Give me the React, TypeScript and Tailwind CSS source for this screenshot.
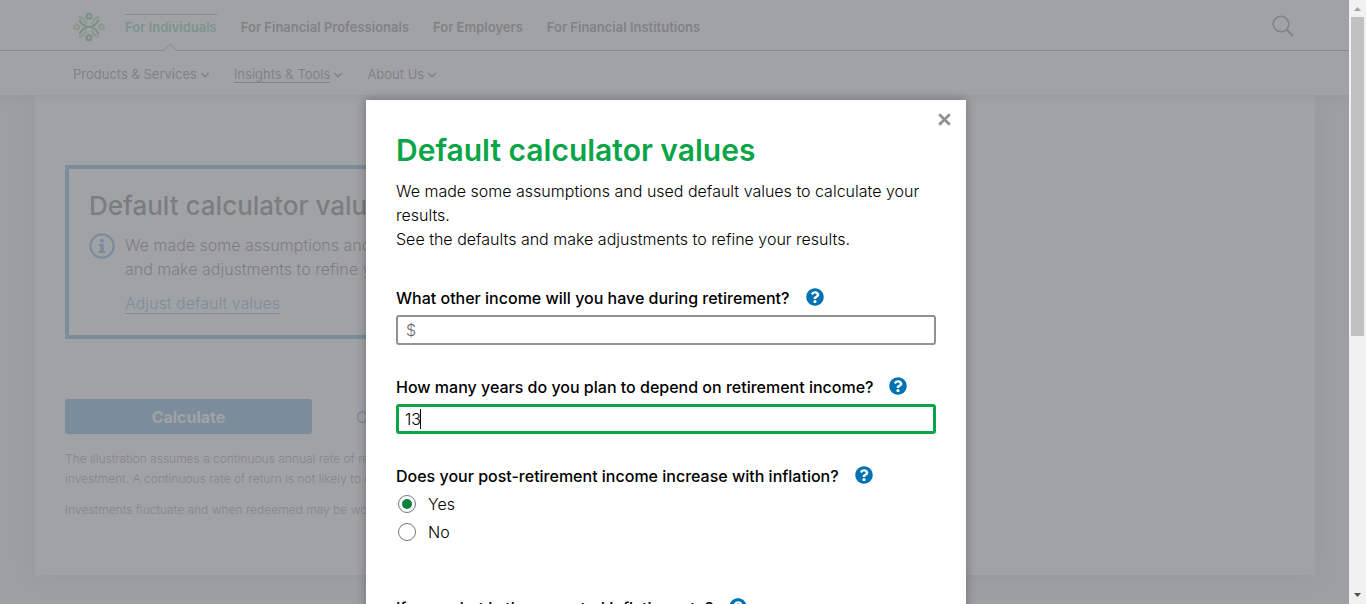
import { useState, type ReactNode } from "react";
import { FaQuestionCircle } from "react-icons/fa";

const audiences = ["For Individuals", "For Financial Professionals", "For Employers", "For Financial Institutions"];
const sections = ["Products & Services", "Insights & Tools", "About Us"];

function Logo() {
  return (
    <svg viewBox="0 0 32 30" className="h-[30px] w-8" fill="none" strokeWidth="2.2" aria-hidden="true">
      <g stroke="#7fb83a" strokeLinecap="round">
        <circle cx="3.600" cy="15" r="2.400" />
        <circle cx="28.400" cy="15" r="2.400" />
        <path d="M6.500 5.200c3 .2 5.500 3 6.500 6.300M25.500 5.200c-3 .2-5.500 3-6.500 6.300M6.500 24.800c3-.2 5.500-3 6.500-6.300M25.500 24.800c-3-.2-5.500-3-6.500-6.300" />
      </g>
      <g stroke="#00873e" strokeLinecap="round">
        <circle cx="16" cy="4.200" r="2.400" />
        <circle cx="16" cy="25.800" r="2.400" />
        <path d="M6.800 8.600c1.600 3.200 4.200 5.600 7.700 6.400-3.500.8-6.100 3.200-7.700 6.400M25.200 8.600c-1.600 3.200-4.200 5.600-7.700 6.400 3.500.8 6.100 3.200 7.700 6.400M13 15h6" />
      </g>
    </svg>
  );
}

function Chevron() {
  return (
    <svg viewBox="0 0 10 6" className="h-1.5 w-2.5" fill="none" stroke="currentColor" strokeWidth="1.3" aria-hidden="true">
      <path d="M1.200 1 5 4.800 8.800 1" />
    </svg>
  );
}

function Header() {
  return (
    <header className="relative shrink-0 bg-white text-[13px] text-[#222] shadow-[0_2px_10px_rgba(0,0,0,0.25)]">
      <div className="flex h-[51px] items-center border-b border-[#00873e] pl-[73px] pr-[55px]">
        <a href="#home" aria-label="Home" className="mt-1">
          <Logo />
        </a>
        <nav className="ml-5 flex gap-6 self-stretch font-semibold leading-5">
          {audiences.map((name, i) => (
            <a key={name} href="#audience" className={i === 0 ? "relative text-[#00a04a]" : ""}>
              <span className={i === 0 ? "mt-3.5 block border-t border-[#00873e] pt-0.5" : "mt-[17px] block"}>{name}</span>
              {i === 0 && (
                <svg viewBox="0 0 12 8" className="absolute -bottom-px left-[39px] h-2 w-3" aria-hidden="true">
                  <path d="M0 7.500 6 1l6 6.500V8H0z" fill="#fff" />
                  <path d="M0 7.500 6 1l6 6.500" fill="none" stroke="#00873e" />
                </svg>
              )}
            </a>
          ))}
        </nav>
        <button type="button" aria-label="Search" className="ml-auto mt-0.5">
          <svg viewBox="0 0 22 22" className="size-[22px]" fill="none" stroke="#222" strokeWidth="1.500" aria-hidden="true">
            <circle cx="9" cy="9" r="7.800" />
            <path d="m14.500 14.500 6.300 6.300" strokeWidth="2" />
          </svg>
        </button>
      </div>
      <nav className="flex h-11 items-center gap-6 pl-[73px] pt-[3px]">
        {sections.map((name, i) => (
          <button key={name} type="button" className="flex items-center gap-[3px]">
            <span className={i === 1 ? "border-b border-[#333] leading-4" : "leading-[17px]"}>{name}</span>
            <Chevron />
          </button>
        ))}
      </nav>
    </header>
  );
}

function CalculatorCard() {
  return (
    <main className="ml-[35px] mr-[34px] h-[480px] bg-white px-[30px] pt-[70px] shadow-[0_0_20px_rgba(0,0,0,0.2)]">
      <section className="h-[174px] w-2/3 overflow-hidden whitespace-nowrap border-4 border-[#0071b3] px-5 pt-[19px]">
        <h2 className="text-[26px] font-medium leading-9 text-black">Default calculator values</h2>
        <div className="mt-[9px] flex gap-2.5 text-base font-light leading-6 text-black">
          <svg viewBox="0 0 26 26" className="size-[26px] shrink-0" fill="none" aria-hidden="true">
            <circle cx="13" cy="13" r="11.600" stroke="#0071b3" strokeWidth="2.200" />
            <circle cx="13" cy="7.600" r="2.100" fill="#0071b3" />
            <path d="M9.800 11h5v7h1.500v2.200H9.800V18h1.500v-4.800H9.800z" fill="#0071b3" />
          </svg>
          <div>
            <p>
              We made some assumptions and used default values to calculate your results. See the defaults
              <br />
              and make adjustments to refine your results.
            </p>
            <a href="#defaults" className="mt-3 inline-block border-b border-[#0071b3] leading-5 text-[#0071b3]">
              Adjust default values
            </a>
          </div>
        </div>
      </section>
      <div className="mt-[60px] flex">
        <button type="button" className="h-[35px] w-[247px] rounded-[3px] bg-[#0071b3] text-base font-bold text-white">
          Calculate
        </button>
        <button type="button" className="ml-11 text-base text-[#0071b3]">
          Clear
        </button>
      </div>
      <div className="mt-[15px] w-2/3 overflow-hidden whitespace-nowrap text-[12px] font-light leading-5 text-[#333]">
        <p>
          The illustration assumes a continuous annual rate of return on the
          <br />
          investment. A continuous rate of return is not likely to occur.
        </p>
        <p className="mt-[11px]">Investments fluctuate and when redeemed may be worth more or less than originally invested.</p>
      </div>
    </main>
  );
}

function Question({ htmlFor, children }: { htmlFor?: string; children: ReactNode }) {
  return (
    <div className="flex h-6 items-center gap-4 text-black">
      {htmlFor ? (
        <label htmlFor={htmlFor} className="font-medium">
          {children}
        </label>
      ) : (
        <span id="inflation-label" className="font-medium">
          {children}
        </span>
      )}
      <button type="button" aria-label="Help" className="pb-0.5">
        <FaQuestionCircle className="size-[18px] text-[#0071b3]" />
      </button>
    </div>
  );
}

function DefaultsDialog() {
  const [income, setIncome] = useState("");
  const [years, setYears] = useState("13");
  const [inflation, setInflation] = useState("Yes");
  return (
    <div
      role="dialog"
      aria-labelledby="dialog-title"
      className="relative w-[600px] bg-white p-[30px] text-base leading-6 shadow-[0_0_10px_rgba(0,0,0,0.3)]"
    >
      <button type="button" aria-label="Close" className="absolute right-[15px] top-[13px]">
        <svg viewBox="0 0 13 13" className="size-[13px]" stroke="#919296" strokeWidth="2.800" aria-hidden="true">
          <path d="m1.200 1.200 10.600 10.600M11.800 1.200 1.200 11.800" />
        </svg>
      </button>
      <h1 id="dialog-title" className="text-[30px] font-semibold leading-10 text-[#0ba548]">
        Default calculator values
      </h1>
      <p className="mt-[9px] font-light text-black">
        We made some assumptions and used default values to calculate your results.
        <br />
        See the defaults and make adjustments to refine your results.
      </p>
      <form className="mt-[35px]">
        <Question htmlFor="income">What other income will you have during retirement?</Question>
        <input
          id="income"
          value={income}
          onChange={(e) => setIncome(e.target.value)}
          placeholder="$"
          className="mt-[5px] block h-[30px] w-full rounded-[3px] border-2 border-[#919296] px-2 font-light outline-none placeholder:text-[#666]"
        />
        <div className="mt-[30px]">
          <Question htmlFor="years">How many years do you plan to depend on retirement income?</Question>
          <div className="relative mt-[5px]">
            <input
              id="years"
              value={years}
              onChange={(e) => setYears(e.target.value)}
              className="block h-[30px] w-full rounded-[3px] border-3 border-[#0ba548] px-1.5 font-light text-black caret-transparent outline-none"
            />
            <span className="absolute left-6 top-[5px] h-5 w-px bg-black" />
          </div>
        </div>
        <div className="mt-[30px]" role="radiogroup" aria-labelledby="inflation-label">
          <Question>Does your post-retirement income increase with inflation?</Question>
          <div className="mt-0.5 font-light text-black">
            {["Yes", "No"].map((option) => (
              <label key={option} className="flex h-7 items-center gap-3 pl-0.5">
                <input
                  type="radio"
                  name="inflation"
                  checked={inflation === option}
                  onChange={() => setInflation(option)}
                  className="size-[18px] appearance-none rounded-full border border-[#76777a] bg-white bg-clip-content p-[3px] checked:bg-[#0b8040]"
                />
                {option}
              </label>
            ))}
          </div>
        </div>
        <div className="mt-[50px]">
          <Question htmlFor="rate">If yes, what is the expected inflation rate?</Question>
          <input id="rate" className="mt-[5px] block h-[30px] w-full rounded-[3px] border-2 border-[#919296] px-2" />
        </div>
      </form>
    </div>
  );
}

function Scrollbar() {
  return (
    <div className="flex w-[17px] shrink-0 flex-col items-center bg-[#f1f1f1]" aria-hidden="true">
      <svg viewBox="0 0 17 17" className="size-[17px] shrink-0">
        <path d="M5 11h7L8.500 7z" fill="#a3a3a3" />
      </svg>
      <div className="flex w-full flex-1 justify-center">
        <div className="h-[56%] w-[13px] bg-[#c1c1c1]" />
      </div>
      <svg viewBox="0 0 17 17" className="size-[17px] shrink-0">
        <path d="M5 6h7l-3.500 4z" fill="#505050" />
      </svg>
    </div>
  );
}

export default function App() {
  return (
    <div className="flex h-screen overflow-hidden font-['Inter',sans-serif]">
      <div className="relative min-w-0 flex-1 overflow-hidden bg-[#e6e6e6]">
        <Header />
        <CalculatorCard />
        <div className="absolute inset-0 flex items-start justify-center overflow-hidden bg-[#919296]/85 pr-[17px] pt-[100px]">
          <DefaultsDialog />
        </div>
      </div>
      <Scrollbar />
    </div>
  );
}
